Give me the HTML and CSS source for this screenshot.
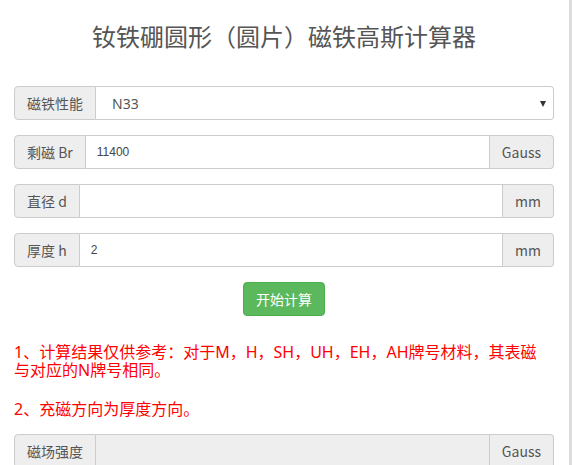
FILE: index.html
```html
<!DOCTYPE html>
<html lang="zh-CN">
<head>
<meta charset="utf-8">
<title>钕铁硼圆形（圆片）磁铁高斯计算器</title>
<link rel="stylesheet" href="styles.css">
</head>
<body>
<div class="page">
  <main class="main">
    <h3 class="title">钕铁硼圆形（圆片）磁铁高斯计算器</h3>

    <div class="group">
      <span class="addon addon-left">磁铁性能</span>
      <div class="select-wrap">
        <select class="control select">
          <option>N33</option>
        </select>
      </div>
    </div>

    <div class="group">
      <span class="addon addon-left">剩磁 Br</span>
      <input class="control input" type="text" value="11400">
      <span class="addon addon-right">Gauss</span>
    </div>

    <div class="group">
      <span class="addon addon-left">直径 d</span>
      <input class="control input" type="text" value="">
      <span class="addon addon-right">mm</span>
    </div>

    <div class="group">
      <span class="addon addon-left">厚度 h</span>
      <input class="control input" type="text" value="2">
      <span class="addon addon-right">mm</span>
    </div>

    <div class="actions">
      <button class="btn" type="button">开始计算</button>
    </div>

    <p class="note note-first">1、计算结果仅供参考：对于M，H，SH，UH，EH，AH牌号材料，其表磁与对应的N牌号相同。</p>
    <p class="note note-second">2、充磁方向为厚度方向。</p>

    <div class="group">
      <span class="addon addon-left">磁场强度</span>
      <input class="control input readonly" type="text" value="" readonly>
      <span class="addon addon-right">Gauss</span>
    </div>
  </main>
  <div class="scrollbar"></div>
</div>
</body>
</html>
```

FILE: styles.css
```css
html, body {
  margin: 0;
  padding: 0;
  background: #fff;
  height: 100%;
  overflow: hidden;
}

body {
  font-family: "Noto Sans", "Noto Sans CJK SC", sans-serif;
  font-size: 14px;
  color: #333;
}

.page {
  display: flex;
  height: 465px;
}

.main {
  flex: 1;
  padding: 0 15px 0 14px;
  min-width: 0;
}

.scrollbar {
  width: 3px;
  background: #dcdcdc;
}

.title {
  margin: 22px 0 36px;
  font-size: 24px;
  line-height: 28px;
  font-weight: normal;
  text-align: center;
  color: #555;
  font-family: "Noto Sans CJK SC", sans-serif;
}

.group {
  display: flex;
  height: 34px;
  margin-bottom: 15px;
  box-sizing: border-box;
}

.addon {
  display: flex;
  align-items: center;
  padding: 0 12px;
  background: #eee;
  border: 1px solid #ccc;
  color: #555;
  font-size: 14px;
  font-family: "Noto Sans CJK SC", sans-serif;
  white-space: nowrap;
  box-sizing: border-box;
}

.addon-left {
  border-radius: 4px 0 0 4px;
  border-right: 1px solid #ccc;
}

.addon-right {
  border-radius: 0 4px 4px 0;
  border-left: 0;
}

.control {
  flex: 1;
  min-width: 0;
  height: 34px;
  box-sizing: border-box;
  border: 1px solid #ccc;
  border-left: 0;
  margin: 0;
  background: #fff;
  outline: none;
}

.input {
  padding: 0 11px;
  font-family: "Liberation Sans", sans-serif;
  font-size: 12px;
  color: #444;
}

.input.readonly {
  background: #eee;
}

.select-wrap {
  flex: 1;
  display: flex;
  position: relative;
}

.select-wrap::after {
  content: "";
  position: absolute;
  right: 8px;
  top: 15px;
  border-left: 3px solid transparent;
  border-right: 3px solid transparent;
  border-top: 6px solid #333;
}

.select {
  appearance: none;
  -webkit-appearance: none;
  padding: 0 16px;
  border-radius: 0 4px 4px 0;
  font-family: "Noto Sans", sans-serif;
  font-size: 14px;
  color: #555;
}

.actions {
  display: flex;
  justify-content: center;
  margin-bottom: 27px;
}

.btn {
  height: 34px;
  padding: 0 12px;
  border: 1px solid #4cae4c;
  border-radius: 4px;
  background: #5cb85c;
  color: #fff;
  font-size: 14px;
  font-family: "Noto Sans CJK SC", sans-serif;
}

.note {
  margin: 0;
  padding-right: 8px;
  color: #f00;
  font-size: 16px;
  line-height: 18px;
  font-family: "Noto Sans", "Noto Sans CJK SC", sans-serif;
}

.note-first {
  margin-bottom: 21px;
}

.note-second {
  margin-bottom: 16px;
}
```
